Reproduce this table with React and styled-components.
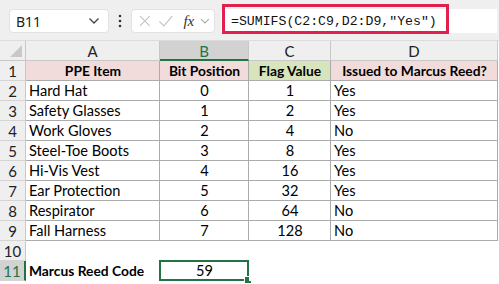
import React from "react";
import styled, { createGlobalStyle } from "styled-components";

const Global = createGlobalStyle`
  html, body { margin: 0; padding: 0; background: #ffffff; }
  body { width: 499px; height: 284px; overflow: hidden; font-family: Lato, "Open Sans", sans-serif; }
  * { box-sizing: border-box; }
`;

const Page = styled.div`
  display: flex;
  flex-direction: column;
  width: 499px;
  height: 284px;
  background: #ffffff;
`;

const Toolbar = styled.div`
  height: 41px;
  background: #efefef;
  border-bottom: 1px solid #dcdcdc;
  display: flex;
  align-items: flex-start;
  padding: 9px 2px 0 9px;
`;

const NameBox = styled.div`
  width: 100px;
  height: 24px;
  background: #fff;
  border: 1px solid #e2e2e2;
  border-radius: 4px;
  display: flex;
  align-items: center;
  justify-content: space-between;
  padding: 0 8px 0 6px;
  font-family: "Noto Sans", "Open Sans", sans-serif;
  font-size: 14px;
  color: #222;
`;

const Dots = styled.div`
  width: 22px;
  height: 24px;
  display: flex;
  align-items: center;
  justify-content: center;
`;

const FxBox = styled.div`
  width: 84px;
  height: 24px;
  background: #fff;
  border: 1px solid #e2e2e2;
  border-radius: 4px;
  display: flex;
  align-items: center;
  padding: 0 4px 0 6px;
  gap: 6px;
`;

const Fx = styled.span`
  font-family: "Liberation Serif", serif;
  font-style: italic;
  font-size: 15px;
  color: #333;
  margin-left: 4px;
`;

const FormulaBar = styled.div`
  flex: 1;
  margin-left: 6px;
  height: 24px;
  background: #fff;
  border-radius: 3px 0 0 3px;
  display: flex;
  align-items: center;
  position: relative;
`;

const FormulaText = styled.span`
  font-family: "Liberation Mono", monospace;
  font-size: 13.2px;
  color: #111;
  margin-left: 10px;
`;

const Highlight = styled.div`
  position: absolute;
  left: 1px;
  top: -5px;
  width: 227px;
  height: 30px;
  border: 3px solid #e0204e;
`;

const Sheet = styled.div`
  display: grid;
  grid-template-columns: 26px 134px 89px 82px 167px;
  grid-auto-rows: 20px;
`;

const Corner = styled.div`
  background: #efefef;
  border-right: 1px solid #c8c8c8;
  border-bottom: 1px solid #c8c8c8;
  position: relative;
  &::after {
    content: "";
    position: absolute;
    right: 3px;
    bottom: 3px;
    width: 0;
    height: 0;
    border-left: 12px solid transparent;
    border-bottom: 12px solid #c8c8c8;
  }
`;

const ColHead = styled.div`
  background: ${(p) => (p.$active ? "#d2d2d2" : "#efefef")};
  border-right: 1px solid #c8c8c8;
  border-bottom: ${(p) => (p.$active ? "2px solid #217346" : "1px solid #c8c8c8")};
  color: ${(p) => (p.$active ? "#217346" : "#222")};
  font-family: Lato, sans-serif;
  font-size: 15px;
  display: flex;
  align-items: center;
  justify-content: center;
  padding-top: ${(p) => (p.$active ? "1px" : "0")};
`;

const RowHead = styled.div`
  background: ${(p) => (p.$active ? "#d2d2d2" : "#efefef")};
  border-right: ${(p) => (p.$active ? "2px solid #217346" : "1px solid #c8c8c8")};
  border-bottom: 1px solid #d4d4d4;
  color: ${(p) => (p.$active ? "#217346" : "#222")};
  font-family: Lato, sans-serif;
  font-size: 15px;
  display: flex;
  align-items: center;
  justify-content: center;
`;

const Cell = styled.div`
  position: relative;
  background: ${(p) => p.$bg || "#fff"};
  border-right: ${(p) => (p.$grid ? "1px solid #ababab" : "1px solid transparent")};
  border-bottom: ${(p) => (p.$grid ? "1px solid #ababab" : "1px solid transparent")};
  font-family: Lato, sans-serif;
  font-size: ${(p) => (p.$bold ? "13.8px" : "14.6px")};
  font-weight: ${(p) => (p.$bold ? 700 : 400)};
  color: #000;
  display: flex;
  align-items: center;
  justify-content: ${(p) => (p.$center ? "center" : "flex-start")};
  padding: 0 2px 0 3px;
  white-space: nowrap;
`;

const Selection = styled.div`
  position: absolute;
  left: -1px;
  top: -1px;
  right: -1px;
  bottom: -1px;
  border: 2px solid #217346;
  pointer-events: none;
  &::after {
    content: "";
    position: absolute;
    right: -5px;
    bottom: -5px;
    width: 6px;
    height: 6px;
    background: #217346;
    border: 1px solid #fff;
  }
`;

const PINK = "#f2dcdb";
const GREEN = "#d8e4bc";

const rows = [
  ["Hard Hat", 0, 1, "Yes"],
  ["Safety Glasses", 1, 2, "Yes"],
  ["Work Gloves", 2, 4, "No"],
  ["Steel-Toe Boots", 3, 8, "Yes"],
  ["Hi-Vis Vest", 4, 16, "Yes"],
  ["Ear Protection", 5, 32, "Yes"],
  ["Respirator", 6, 64, "No"],
  ["Fall Harness", 7, 128, "No"],
];

const Chevron = () => (
  <svg width="12" height="8" viewBox="0 0 12 8">
    <path d="M1.5 1.5 L6 6 L10.5 1.5" fill="none" stroke="#444" strokeWidth="1.3" />
  </svg>
);

export default function App() {
  return (
    <Page>
      <Global />
      <Toolbar>
        <NameBox>
          <span>B11</span>
          <Chevron />
        </NameBox>
        <Dots>
          <svg width="4" height="14" viewBox="0 0 4 14">
            <circle cx="2" cy="2" r="1.3" fill="#333" />
            <circle cx="2" cy="7" r="1.3" fill="#333" />
            <circle cx="2" cy="12" r="1.3" fill="#333" />
          </svg>
        </Dots>
        <FxBox>
          <svg width="14" height="14" viewBox="0 0 14 14">
            <path d="M2 2 L12 12 M12 2 L2 12" stroke="#c4c4c4" strokeWidth="1.2" />
          </svg>
          <svg width="16" height="14" viewBox="0 0 16 14">
            <path d="M1.5 7.5 L6 12 L14.5 2" fill="none" stroke="#c4c4c4" strokeWidth="1.2" />
          </svg>
          <Fx>fx</Fx>
          <svg width="10" height="8" viewBox="0 0 10 8">
            <path d="M1 2 L5 6 L9 2" fill="none" stroke="#aaa" strokeWidth="1.1" />
          </svg>
        </FxBox>
        <FormulaBar>
          <FormulaText>=SUMIFS(C2:C9,D2:D9,"Yes")</FormulaText>
          <Highlight />
        </FormulaBar>
      </Toolbar>
      <Sheet>
        <Corner />
        <ColHead>A</ColHead>
        <ColHead $active>B</ColHead>
        <ColHead>C</ColHead>
        <ColHead>D</ColHead>

        <RowHead>1</RowHead>
        <Cell $grid $bold $center $bg={PINK}>PPE Item</Cell>
        <Cell $grid $bold $center $bg={PINK}>Bit Position</Cell>
        <Cell $grid $bold $center $bg={GREEN}>Flag Value</Cell>
        <Cell $grid $bold $center $bg={PINK}>Issued to Marcus Reed?</Cell>

        {rows.map((r, i) => (
          <React.Fragment key={i}>
            <RowHead>{i + 2}</RowHead>
            <Cell $grid>{r[0]}</Cell>
            <Cell $grid $center>{r[1]}</Cell>
            <Cell $grid $center>{r[2]}</Cell>
            <Cell $grid>{r[3]}</Cell>
          </React.Fragment>
        ))}

        <RowHead>10</RowHead>
        <Cell />
        <Cell />
        <Cell />
        <Cell />

        <RowHead $active>11</RowHead>
        <Cell $bold>Marcus Reed Code</Cell>
        <Cell $center>
          59
          <Selection />
        </Cell>
        <Cell />
        <Cell />
      </Sheet>
    </Page>
  );
}
